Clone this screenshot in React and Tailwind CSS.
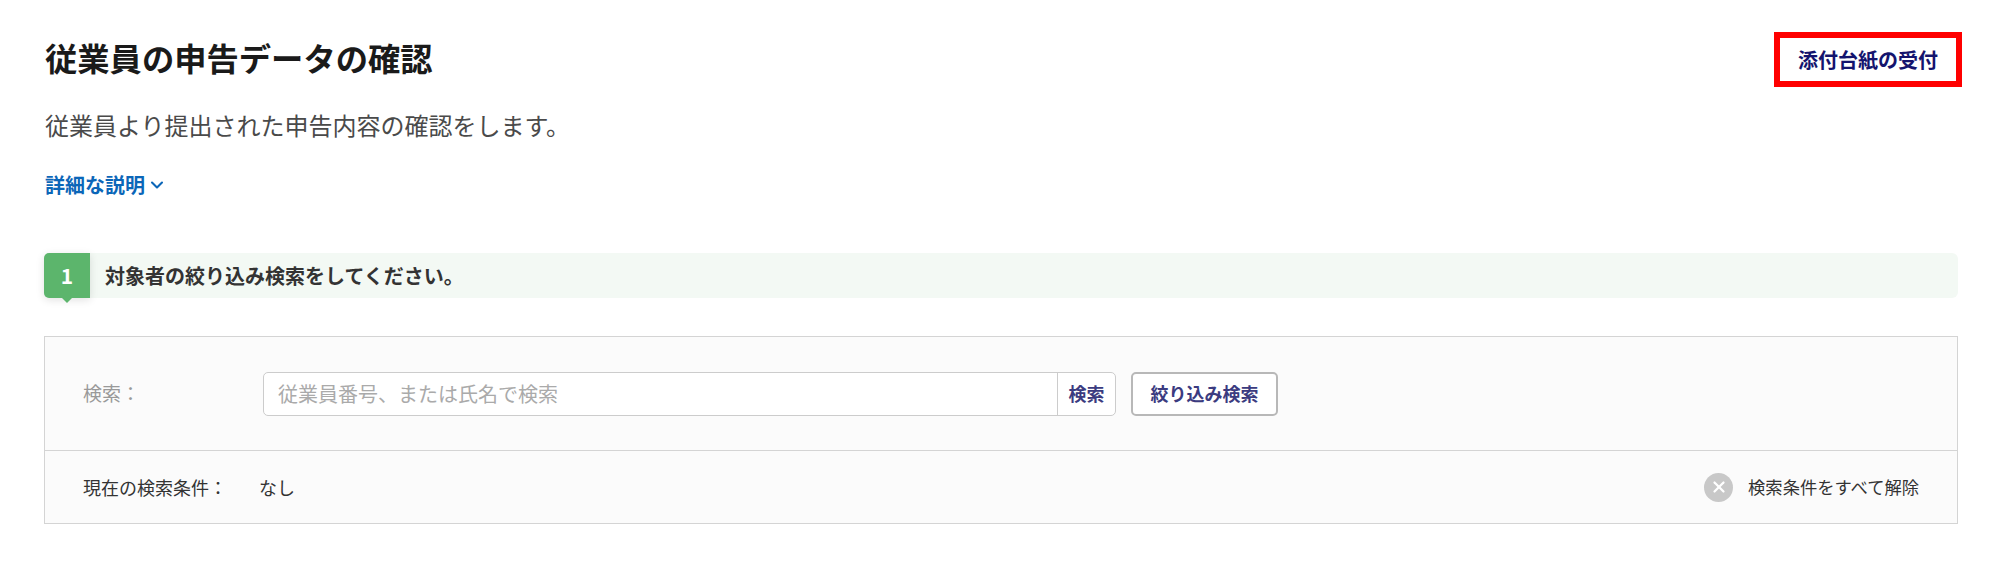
import React from 'react';
import { ChevronDown, X } from 'lucide-react';

const font = "font-['Noto_Sans_CJK_JP','Liberation_Sans',sans-serif]";

const App = () => {
  return (
    <div className={`${font} bg-white w-[2000px] h-[564px] overflow-hidden pl-[44px] pr-[42px] pt-[32px] text-[#333333]`}>
      <div className="flex items-start justify-between h-[55px] pl-[1px]">
        <h1 className="text-[32.3px] leading-[50px] font-bold text-[#1a1a1a]">従業員の申告データの確認</h1>
        <a className="-mr-[4px] flex items-center justify-center w-[188px] h-[55px] border-[6px] border-[#ff0000] bg-white text-[20px] font-bold text-[#14146e]">
          添付台紙の受付
        </a>
      </div>

      <p className="mt-[20px] pl-[1px] text-[24px] leading-[36px] text-[#4a4a4a]">従業員より提出された申告内容の確認をします。</p>

      <a className="mt-[27px] pl-[1px] flex items-center gap-[2px] text-[20px] leading-[30px] font-bold text-[#0b66b8]">
        詳細な説明
        <ChevronDown size={20} strokeWidth={2.5} />
      </a>

      <div className="mt-[53px] flex h-[45px] items-stretch rounded-[6px] bg-[#f3f9f4]">
        <div className="relative flex w-[46px] items-center justify-center rounded-l-[5px] bg-[#5cb56c] text-[21px] font-bold text-white shadow-[0_2px_8px_rgba(0,0,0,0.12)]">
          1
          <span className="absolute left-1/2 top-full -ml-[5px] h-0 w-0 border-x-[5px] border-t-[5px] border-x-transparent border-t-[#5cb56c]" />
        </div>
        <p className="flex items-center pl-[15px] text-[20px] font-bold text-[#333333]">対象者の絞り込み検索をしてください。</p>
      </div>

      <div className="mt-[38px] border border-[#d4d4d4] bg-[#fbfbfb]">
        <div className="flex h-[114px] items-center border-b border-[#d4d4d4] pl-[38px]">
          <span className="w-[180px] text-[19px] text-[#999999]">検索：</span>
          <div className="flex h-[44px] w-[853px] rounded-[5px] border border-[#cccccc] bg-white">
            <input
              className="min-w-0 flex-1 bg-transparent pl-[14px] text-[20px] outline-none placeholder:text-[#aaaaaa]"
              placeholder="従業員番号、または氏名で検索"
            />
            <button className="w-[58px] border-l border-[#cccccc] text-[18px] font-bold text-[#3b3b80]">検索</button>
          </div>
          <button className="ml-[15px] h-[44px] w-[147px] rounded-[5px] border-2 border-[#b8b8b8] bg-white text-[18px] font-bold text-[#3b3b80]">
            絞り込み検索
          </button>
        </div>
        <div className="flex h-[72px] items-center justify-between pl-[38px] pr-[38px]">
          <div className="flex items-center text-[18px] text-[#333333]">
            <span className="w-[176px]">現在の検索条件：</span>
            <span>なし</span>
          </div>
          <button className="flex items-center gap-[15px] text-[17.3px] text-[#333333]">
            <span className="flex h-[29px] w-[29px] items-center justify-center rounded-full bg-[#c8c8c8] text-white">
              <X size={18} strokeWidth={3} />
            </span>
            検索条件をすべて解除
          </button>
        </div>
      </div>
    </div>
  );
};

export default App;
